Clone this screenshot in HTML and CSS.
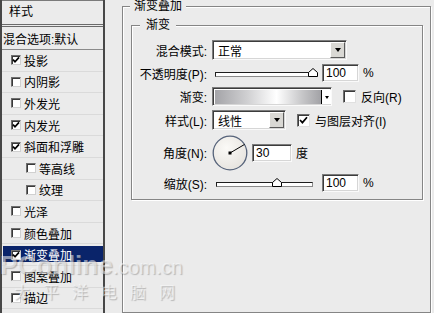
FILE: index.html
```html
<!DOCTYPE html>
<html lang="zh-CN">
<head>
  <meta charset="UTF-8">
  <meta name="viewport" content="width=device-width, initial-scale=1.0">
  <title>图层样式 - 渐变叠加</title>
  <link rel="stylesheet" href="styles.css">
</head>
<body>
  <div class="dialog">
    <!-- left: style list -->
    <div class="style-list">
      <div class="list-head">样式</div>
      <div class="list-item blend">混合选项:默认</div>
      <div class="list-item"><span class="check on"><svg viewBox="0 0 8 8"><path d="M1 3.6l2 2.2L7 1.4"/></svg></span>投影</div>
      <div class="list-item"><span class="check"></span>内阴影</div>
      <div class="list-item"><span class="check"></span>外发光</div>
      <div class="list-item"><span class="check on"><svg viewBox="0 0 8 8"><path d="M1 3.6l2 2.2L7 1.4"/></svg></span>内发光</div>
      <div class="list-item"><span class="check on"><svg viewBox="0 0 8 8"><path d="M1 3.6l2 2.2L7 1.4"/></svg></span>斜面和浮雕</div>
      <div class="list-item sub"><span class="check"></span>等高线</div>
      <div class="list-item sub"><span class="check"></span>纹理</div>
      <div class="list-item"><span class="check"></span>光泽</div>
      <div class="list-item"><span class="check"></span>颜色叠加</div>
      <div class="list-item selected"><span class="check on"><svg viewBox="0 0 8 8"><path d="M1 3.6l2 2.2L7 1.4"/></svg></span>渐变叠加</div>
      <div class="list-item"><span class="check"></span>图案叠加</div>
      <div class="list-item"><span class="check"></span>描边</div>
    </div>

    <!-- right: gradient overlay settings -->
    <div class="panel">
      <fieldset class="group outer">
        <legend>渐变叠加</legend>
        <fieldset class="group inner">
          <legend>渐变</legend>

          <div class="row r1">
            <span class="name">混合模式:</span>
            <div class="select mode"><span>正常</span><b class="drop"></b></div>
          </div>

          <div class="row r2">
            <span class="name">不透明度(P):</span>
            <div class="slider op">
              <div class="track"></div>
              <svg class="thumb" style="left: 93px" viewBox="0 0 10 9"><path d="M0.5 8.5V4.5L5 0.5L9.5 4.5V8.5Z"/></svg>
            </div>
            <div class="num">100</div>
            <span class="unit">%</span>
          </div>

          <div class="row r3">
            <span class="name">渐变:</span>
            <div class="grad"><div class="grad-fill"></div><b class="grad-arrow"></b></div>
            <span class="box"></span>
            <span class="opt">反向(R)</span>
          </div>

          <div class="row r4">
            <span class="name">样式(L):</span>
            <div class="select kind"><span>线性</span><b class="drop"></b></div>
            <span class="box"><svg viewBox="0 0 11 11"><path d="M2 5l2.4 2.6L9 2.2"/></svg></span>
            <span class="opt">与图层对齐(I)</span>
          </div>

          <div class="row r5">
            <span class="name">角度(N):</span>
            <svg class="dial" viewBox="0 0 36 36">
              <defs>
                <radialGradient id="dialFill" cx="0.4" cy="0.35" r="0.7">
                  <stop offset="0" stop-color="#fbfaf7"/>
                  <stop offset="1" stop-color="#e6e3de"/>
                </radialGradient>
              </defs>
              <circle cx="18" cy="18" r="16.8" fill="url(#dialFill)" stroke="#56637a" stroke-width="1.3"/>
              <line x1="18" y1="18" x2="32.6" y2="9.4" stroke="#000" stroke-width="1"/>
              <rect x="16.5" y="16.5" width="3" height="3" fill="#000"/>
            </svg>
            <div class="num angle">30</div>
            <span class="unit">度</span>
          </div>

          <div class="row r6">
            <span class="name">缩放(S):</span>
            <div class="slider sc">
              <div class="track"></div>
              <svg class="thumb" style="left: 56px" viewBox="0 0 10 9"><path d="M0.5 8.5V4.5L5 0.5L9.5 4.5V8.5Z"/></svg>
            </div>
            <div class="num">100</div>
            <span class="unit">%</span>
          </div>
        </fieldset>
      </fieldset>
    </div>

    <div class="watermark" aria-hidden="true">
      <div class="wm-en">PConline<span>.com.cn</span></div>
      <div class="wm-cn">太平洋电脑网</div>
    </div>
  </div>
</body>
</html>
```

FILE: styles.css
```css
:root {
  --bg-color: #ebebeb;
  --line-dark: #858585;
  --select-bg: #0a246a;
  --btn-bg: #d9d8d4;
}
body {
  margin: 0;
  background: var(--bg-color);
  font-family: Tahoma, "Liberation Sans", "Noto Sans CJK SC", sans-serif;
  font-size: 12px;
  color: #000;
}
.dialog {
  display: flex;
  height: 313px;
  position: relative;
  overflow: hidden;
}

/* style list */
.style-list {
  flex: none;
  width: 105px;
  box-sizing: border-box;
  border-left: 2px solid #474747;
  border-right: 2px solid #474747;
}
.list-head {
  height: 27px;
  box-sizing: border-box;
  line-height: 22px;
  padding-left: 7px;
  border-top: 1px solid #7a7a7a;
  border-bottom: 3px double #6a6a6a;
}
.list-item {
  height: 21.6px;
  box-sizing: border-box;
  display: flex;
  align-items: center;
  gap: 3px;
  padding-left: 9px;
  border-bottom: 1px solid #dadada;
  white-space: nowrap;
}
.list-item.blend {
  height: 23px;
  padding-left: 1px;
  border-bottom: 1px solid #8a8a8a;
}
.list-item.sub {
  padding-left: 24px;
}
.list-item.selected {
  color: #fff;
  background: linear-gradient(var(--select-bg), var(--select-bg)) 1px 2px / calc(100% - 1px) calc(100% - 5px) no-repeat;
}
.check {
  width: 10px;
  height: 10px;
  box-sizing: border-box;
  flex: none;
  background: #fff;
  border: 1px solid;
  border-color: #6e6e6e #d0d0d0 #d0d0d0 #6e6e6e;
  box-shadow: inset 1px 1px #3a3a3a;
  display: flex;
}
.check svg,
.box svg {
  width: 100%;
  height: 100%;
  fill: none;
  stroke: #000;
  stroke-width: 1.7;
}

/* settings panel */
.panel {
  flex: 1;
  padding-left: 17px;
}
.group {
  margin: 0;
  padding: 0;
  border: 1px solid var(--line-dark);
  box-shadow: inset 1px 1px #fff, 1px 1px #fff;
}
.group legend {
  line-height: 12px;
  background: var(--bg-color);
}
.outer {
  width: 309px;
  height: 313px;
  box-sizing: border-box;
}
.outer > legend {
  margin-left: 7px;
  padding: 0 4px;
}
.inner {
  margin: 7px 7px 0 8px;
  padding: 9px 0 7px 0;
}
.inner > legend {
  margin-left: 8px;
  padding: 0 6px;
}
.row {
  display: flex;
  align-items: center;
  white-space: nowrap;
}
.row .name {
  flex: none;
  width: 75px;
  margin-right: 5px;
  text-align: right;
}
.r1 { height: 20px; }
.r2 { height: 18px; margin-top: 4px; }
.r3 { height: 19px; margin-top: 5px; }
.r4 { height: 20px; margin-top: 4px; }
.r5 { height: 37px; margin-top: 4px; }
.r6 { height: 18px; margin-top: 3px; }

.select,
.num,
.grad {
  box-sizing: border-box;
  background: #fff;
  border: 1px solid;
  border-color: #7c7c7c #fafafa #fafafa #7c7c7c;
  box-shadow: inset 1px 1px #3c3c3c, inset -1px -1px #d6d6d6;
}
.select {
  height: 20px;
  display: flex;
  align-items: center;
}
.select span {
  flex: 1;
  padding-left: 5px;
}
.mode { width: 135px; }
.kind { width: 74px; }
.drop {
  width: 15px;
  height: 16px;
  box-sizing: border-box;
  margin-right: 1px;
  background: var(--btn-bg);
  border: 1px solid;
  border-color: #fff #5a5a5a #5a5a5a #fff;
  display: flex;
  align-items: center;
  justify-content: center;
}
.drop::after {
  content: "";
  border-left: 3.5px solid transparent;
  border-right: 3.5px solid transparent;
  border-top: 4px solid #000;
}

.slider {
  position: relative;
  height: 18px;
  flex: none;
}
.slider.op { width: 98px; margin-left: 3px; }
.slider.sc { width: 97px; margin-left: 4px; }
.track {
  position: absolute;
  left: 0;
  right: 0;
  top: 8px;
  height: 5px;
  box-sizing: border-box;
  background: #fff;
  border: 1px solid #1e1e1e;
  border-bottom-color: #8a8a8a;
  border-right-color: #8a8a8a;
}
.thumb {
  position: absolute;
  top: 4px;
  width: 10px;
  height: 9px;
  fill: #fff;
  stroke: #000;
  stroke-width: 1;
}
.num {
  flex: none;
  width: 37px;
  height: 18px;
  margin-left: 9px;
  padding-left: 3px;
  line-height: 16px;
}
.num.angle {
  width: 40px;
  margin-left: 4px;
}
.unit {
  margin-left: 4px;
}

.grad {
  width: 120px;
  height: 19px;
  display: flex;
  padding: 2px 0 1px 2px;
}
.grad-fill {
  flex: 1;
  background: linear-gradient(90deg, #a4a4a8 0%, #cfcfd1 30%, #ffffff 58%, #c7c7c9 82%, #a2a2a6 100%);
}
.grad-arrow {
  width: 9px;
  border-left: 1px solid #000;
  background: #fff;
  display: flex;
  align-items: center;
  justify-content: center;
}
.grad-arrow::after {
  content: "";
  border-left: 2.5px solid transparent;
  border-right: 2.5px solid transparent;
  border-top: 3px solid #000;
}
.box {
  flex: none;
  width: 13px;
  height: 13px;
  margin-left: 11px;
  box-sizing: border-box;
  background: #fff;
  border: 1px solid;
  border-color: #6e6e6e #e0e0e0 #e0e0e0 #6e6e6e;
  box-shadow: inset 1px 1px #3a3a3a;
  display: flex;
}
.opt {
  margin-left: 5px;
}
.dial {
  flex: none;
  width: 36px;
  height: 36px;
}

/* site watermark */
.watermark {
  position: absolute;
  left: 0;
  top: 250px;
  pointer-events: none;
  color: rgba(255, 255, 255, 0.5);
  text-shadow: 1px 1px 1px rgba(60, 60, 60, 0.3);
}
.wm-en {
  font-family: "Liberation Sans", Arial, sans-serif;
  font-weight: bold;
  font-size: 26px;
  line-height: 30px;
}
.wm-en span {
  font-weight: normal;
  font-size: 20px;
}
.wm-cn {
  font-family: "Noto Sans CJK SC", sans-serif;
  font-size: 16px;
  line-height: 18px;
  margin-left: 14px;
  letter-spacing: 13px;
}
```
